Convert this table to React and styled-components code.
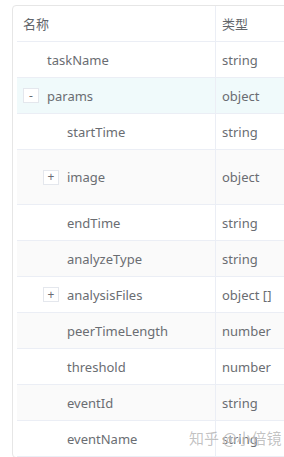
import styled, { createGlobalStyle } from "styled-components";

const GlobalStyle = createGlobalStyle`
  html, body {
    margin: 0;
    padding: 0;
    background: #ffffff;
    overflow: hidden;
  }
  body {
    font-family: "Noto Sans", "Noto Sans CJK SC", sans-serif;
  }
`;

const fields = [
  { name: "taskName", type: "string", level: 0 },
  { name: "params", type: "object", level: 0, toggle: "-" },
  { name: "startTime", type: "string", level: 1 },
  { name: "image", type: "object", level: 1, toggle: "+", height: 55 },
  { name: "endTime", type: "string", level: 1 },
  { name: "analyzeType", type: "string", level: 1 },
  { name: "analysisFiles", type: "object []", level: 1, toggle: "+" },
  { name: "peerTimeLength", type: "number", level: 1 },
  { name: "threshold", type: "number", level: 1 },
  { name: "eventId", type: "string", level: 1 },
  { name: "eventName", type: "string", level: 1 },
];

const App = () => {
  return (
    <Page>
      <GlobalStyle />
      <TableWrap>
        <HeaderRow>
          <NameCell>名称</NameCell>
          <TypeCell>类型</TypeCell>
        </HeaderRow>
        {fields.map((field, i) => (
          <Row
            key={field.name}
            $striped={i % 2 === 1}
            $active={field.name === "params"}
            $height={field.height || 36}
          >
            <NameCell>
              <Indent $level={field.level} />
              {field.toggle ? (
                <ToggleBox>{field.toggle}</ToggleBox>
              ) : (
                <ToggleSpace />
              )}
              <FieldName>{field.name}</FieldName>
            </NameCell>
            <TypeCell>{field.type}</TypeCell>
          </Row>
        ))}
        <Watermark>
          知乎 <At>@小倍镜</At>
        </Watermark>
      </TableWrap>
    </Page>
  );
};

const Page = styled.div`
  padding: 5px 0 0 12px;
  width: 320px;
`;

const TableWrap = styled.div`
  position: relative;
  display: flex;
  flex-direction: column;
  padding: 0 0 0 4px;
  border: 1px solid #e6e6e6;
  border-radius: 4px;
  width: 300px;
  color: #6a6d72;
  font-size: 13px;
`;

const HeaderRow = styled.div`
  display: flex;
  height: 35px;
  border-bottom: 1px solid #ebeef5;
  color: #62656a;
  font-family: "Noto Sans CJK SC", sans-serif;
  font-size: 13px;
`;

const Row = styled.div`
  display: flex;
  height: ${(p) => p.$height}px;
  box-sizing: border-box;
  border-bottom: 1px solid #ebeef5;
  background: ${(p) =>
    p.$active ? "#f0fafb" : p.$striped ? "#fafafa" : "#ffffff"};
  &:last-of-type {
    border-bottom: 0;
  }
`;

const NameCell = styled.div`
  display: flex;
  align-items: center;
  width: 199px;
  padding-left: 6px;
  box-sizing: border-box;
  border-right: 1px solid #ebeef5;
`;

const TypeCell = styled.div`
  display: flex;
  align-items: center;
  flex: 1;
  padding-left: 6px;
`;

const Indent = styled.span`
  display: inline-block;
  width: ${(p) => p.$level * 20}px;
  flex-shrink: 0;
`;

const ToggleBox = styled.span`
  display: inline-flex;
  align-items: center;
  justify-content: center;
  width: 16px;
  height: 15px;
  margin-right: 8px;
  box-sizing: border-box;
  border: 1px solid #e4e7ed;
  background: #ffffff;
  color: #6a6d72;
  font-size: 12px;
  line-height: 1;
  flex-shrink: 0;
`;

const ToggleSpace = styled.span`
  display: inline-block;
  width: 24px;
  flex-shrink: 0;
`;

const FieldName = styled.span`
  white-space: nowrap;
`;

const Watermark = styled.div`
  position: absolute;
  left: 176px;
  bottom: 9px;
  font-family: "Noto Sans CJK SC", sans-serif;
  font-size: 15px;
  color: rgba(120, 120, 120, 0.45);
  pointer-events: none;
  white-space: nowrap;
`;

const At = styled.span`
  text-shadow: 0 0 1px #ffffff;
`;

export default App;
